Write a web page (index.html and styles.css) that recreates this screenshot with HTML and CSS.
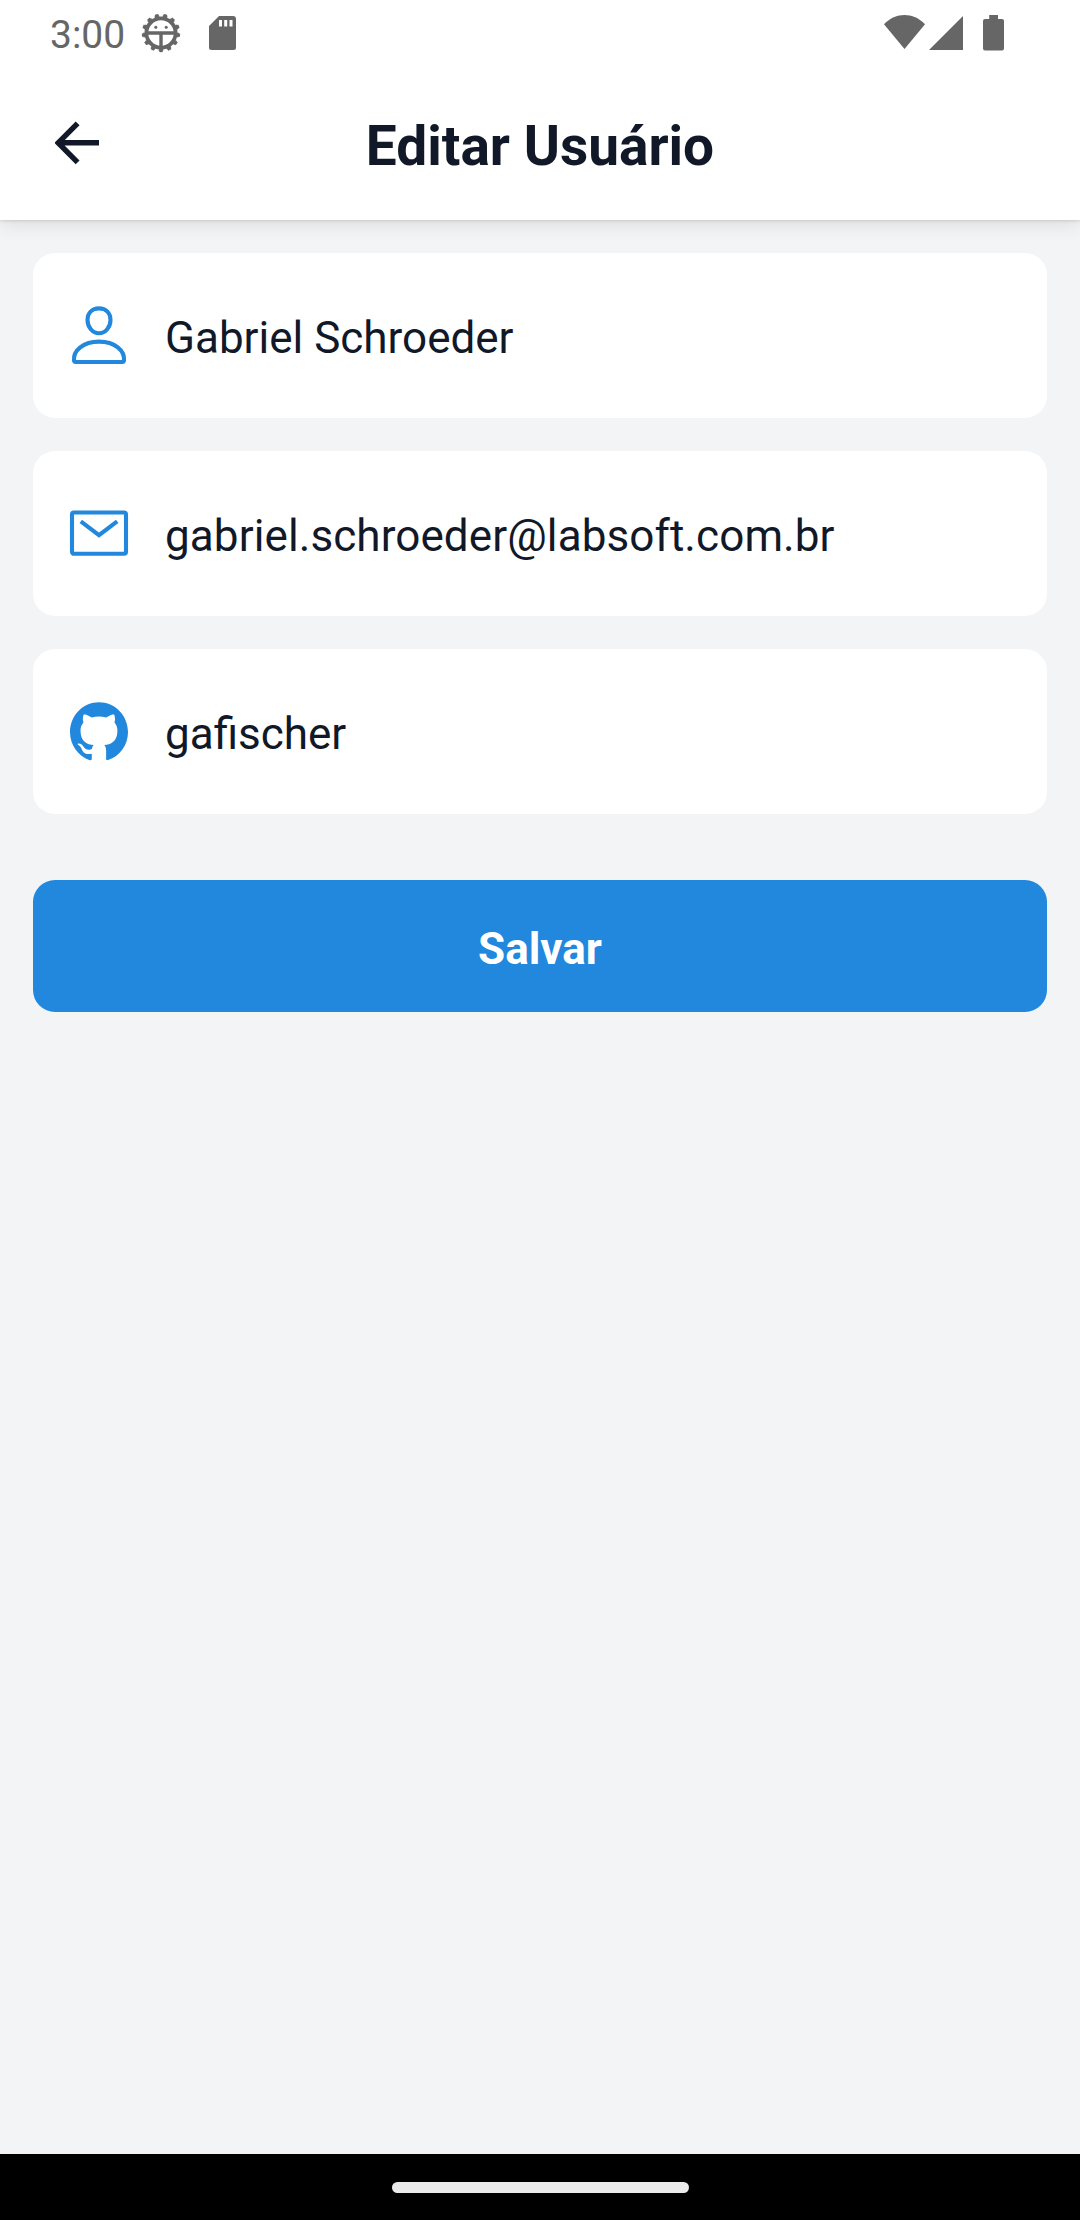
FILE: index.html
```html
<!DOCTYPE html>
<html lang="pt-BR">
<head>
<meta charset="utf-8">
<title>Editar Usuário</title>
<link rel="stylesheet" href="styles.css">
</head>
<body>
<div class="screen">
  <div class="top">
    <div class="status">
      <span class="clock">3:00</span>
      <svg class="gear" viewBox="-20 -20 40 40">
        <g fill="none" stroke="#666">
          <circle r="14.600" stroke-width="3.800"/>
          <circle r="16.900" stroke-width="2" pathLength="130" stroke-dasharray="5.600 4.400" stroke-dashoffset=".3"/>
          <circle r="18.200" stroke-width="2" pathLength="130" stroke-dasharray="4 6" stroke-dashoffset="-.5"/>
          <path d="M-14 0H14M0 0V14" stroke-width="3.400"/>
        </g>
        <circle cx="-5.200" cy="-5.800" r="1.500" fill="#666"/><circle cx="5.200" cy="-5.800" r="1.500" fill="#666"/>
      </svg>
      <svg class="sd" viewBox="0 0 27 34">
        <path fill="#666" fill-rule="evenodd" d="M10 0H24a3 3 0 0 1 3 3V31.500a2.500 2.500 0 0 1-2.500 2.500H2.500A2.500 2.500 0 0 1 0 31.500V10ZM10 4V10.500H13V4ZM15.200 4V10.500H18.200V4ZM20.500 4V10.500H23.500V4Z"/>
      </svg>
      <span class="spacer"></span>
      <svg class="wifi" viewBox="0 0 41 34"><path fill="#666" d="M0 9.200C12-3 29-3 41 9.200L20.500 34Z"/></svg>
      <svg class="signal" viewBox="0 0 34 34"><path fill="#666" d="M34 0V34H0Z"/></svg>
      <svg class="battery" viewBox="0 0 21 36"><path fill="#666" d="M6.200 0H15V4H19a2 2 0 0 1 2 2V33.500a2 2 0 0 1-2 2H2a2 2 0 0 1-2-2V6A2 2 0 0 1 2 4H6.200Z"/></svg>
    </div>
    <header class="header">
      <svg class="back" viewBox="0 0 44 44"><path d="M22.600 2.300 3.200 21.800 22.600 41.300M3.400 21.800H44" fill="none" stroke="#111827" stroke-width="5.400"/></svg>
      <h1 class="title">Editar Usuário</h1>
    </header>
  </div>
  <main class="form">
    <label class="field">
      <svg class="icon" viewBox="0 0 66 66" fill="none" stroke="#2188dd" stroke-width="4.100" stroke-linejoin="round">
        <path d="M33 5.400C40 5.400 44.500 10 44.500 17C44.500 24 39.500 30.200 33 30.200C26.500 30.200 21.500 24 21.500 17C21.500 10 26 5.400 33 5.400Z"/>
        <path d="M8 57.300C7.200 48 17 38.600 33 38.600C49 38.600 58.800 48 58 57.300Q57.800 59 56.200 59H9.800Q8.200 59 8 57.300Z"/>
      </svg>
      <span class="value">Gabriel Schroeder</span>
    </label>
    <label class="field">
      <svg class="icon" viewBox="0 0 66 66" fill="none" stroke="#2188dd" stroke-width="4.100">
        <rect x="6" y="11.500" width="54" height="41.300" rx="2"/>
        <path d="M14.800 20.400 33 34.200 51.200 20.400"/>
      </svg>
      <span class="value email">gabriel.schroeder@labsoft.com.br</span>
    </label>
    <label class="field">
      <svg class="icon" viewBox="0 0 66 66">
        <path transform="translate(4 2.500) scale(2.417 2.477)" fill="#2188dd" d="M12 .297c-6.630 0-12 5.373-12 12 0 5.303 3.438 9.800 8.205 11.385.6.113.82-.258.82-.577 0-.285-.010-1.040-.015-2.040-3.338.724-4.042-1.610-4.042-1.610C4.422 18.070 3.633 17.700 3.633 17.700c-1.087-.744.084-.729.084-.729 1.205.084 1.838 1.236 1.838 1.236 1.070 1.835 2.809 1.305 3.495.998.108-.776.417-1.305.760-1.605-2.665-.3-5.466-1.332-5.466-5.930 0-1.310.465-2.380 1.235-3.220-.135-.303-.540-1.523.105-3.176 0 0 1.005-.322 3.300 1.230.960-.267 1.980-.399 3-.405 1.020.006 2.040.138 3 .405 2.280-1.552 3.285-1.230 3.285-1.230.645 1.653.240 2.873.120 3.176.765.840 1.230 1.910 1.230 3.220 0 4.610-2.805 5.625-5.475 5.920.420.360.810 1.096.810 2.220 0 1.606-.015 2.896-.015 3.286 0 .315.210.690.825.570C20.565 22.092 24 17.592 24 12.297c0-6.627-5.373-12-12-12"/>
      </svg>
      <span class="value">gafischer</span>
    </label>
    <button class="save" type="button">Salvar</button>
  </main>
  <footer class="nav"><span class="pill"></span></footer>
</div>
</body>
</html>
```
FILE: styles.css
```css
* { box-sizing: border-box; }
body { margin: 0; font-family: Roboto, "Noto Sans", sans-serif; color: #111827; }
svg { display: block; flex: none; }
.screen { width: 1080px; height: 2220px; display: flex; flex-direction: column; background: #f2f4f6; }
.top {
  height: 220px;
  background: #fff;
  box-shadow: 0 1px 3px rgba(0, 0, 0, .13), 0 5px 18px rgba(0, 0, 0, .09);
}
.status { height: 66px; padding: 0 76px 0 50px; display: flex; align-items: center; color: #666; }
.clock { font-size: 39px; line-height: 46px; margin-top: 3px; }
.gear { width: 40px; height: 40px; margin-left: 16px; }
.sd { width: 27px; height: 34px; margin-left: 28px; }
.spacer { flex: 1; }
.wifi { width: 41px; height: 34px; margin-top: -2px; }
.signal { width: 34px; height: 34px; margin: -1px 20px 0 4px; }
.battery { width: 21px; height: 36px; }
.header {
  height: 154px;
  padding: 0 55px;
  display: grid;
  grid-template-columns: 44px 1fr 44px;
  align-items: center;
}
.back { width: 44px; height: 44px; }
.title { margin: 6px 0 0; font-size: 55px; line-height: 66px; font-weight: 700; text-align: center; }
.form { flex: 1; padding: 33px; display: flex; flex-direction: column; gap: 33px; }
.field {
  height: 165px;
  padding: 0 33px;
  display: flex;
  align-items: center;
  gap: 33px;
  border-radius: 22px;
  background: #fff;
}
.icon { width: 66px; height: 66px; }
.value { font-size: 44px; line-height: 52px; padding-top: 4px; }
.email { letter-spacing: .1px; }
.save {
  height: 132px;
  margin-top: 33px;
  padding: 6px 0 0;
  border: 0;
  border-radius: 22px;
  background: #2188dd;
  color: #fff;
  font: 700 44px/52px Roboto, "Noto Sans", sans-serif;
}
.nav { height: 66px; display: flex; justify-content: center; align-items: center; background: #000; }
.pill { width: 297px; height: 11px; border-radius: 6px; background: #ebebeb; }
```
